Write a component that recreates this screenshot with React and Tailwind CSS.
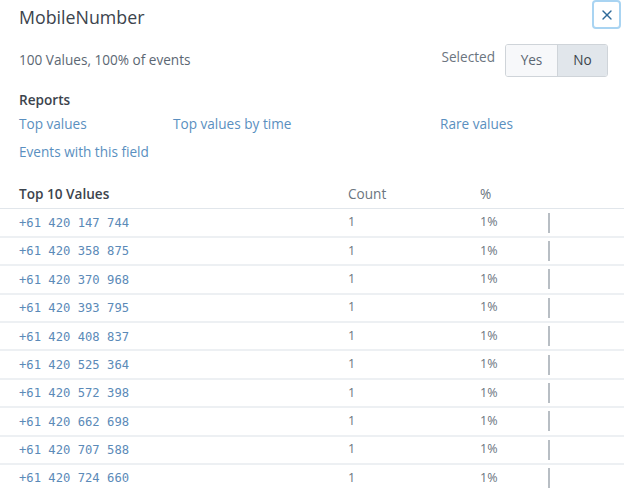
import { X } from 'lucide-react'

const ROWS = [
  '+61 420 147 744',
  '+61 420 358 875',
  '+61 420 370 968',
  '+61 420 393 795',
  '+61 420 408 837',
  '+61 420 525 364',
  '+61 420 572 398',
  '+61 420 662 698',
  '+61 420 707 588',
  '+61 420 724 660',
]

const sans = "font-['Open_Sans',sans-serif]"

export default function App() {
  return (
    <div className={`w-[624px] h-[488px] overflow-hidden bg-white relative ${sans}`}>
      {/* close */}
      <button className="absolute right-[3px] top-0 w-[29px] h-[29px] rounded-[4px] border-2 border-[#a9d4f2] flex items-center justify-center text-[#2f6a99]">
        <X size={16} strokeWidth={2} />
      </button>

      {/* header */}
      <div className="px-[19px] pt-[6px]">
        <h1 className="text-[17.8px] leading-[22px] text-[#3c444d] font-medium">MobileNumber</h1>
        <div className="flex items-center justify-between mt-[16px]">
          <p className="text-[13.6px] text-[#5c6773]">100 Values, 100% of events</p>
          <div className="flex items-center gap-[10px] mr-[-3px]">
            <span className="text-[13.6px] text-[#6b7580] mt-[-6px]">Selected</span>
            <div className="flex h-[33px] rounded-[3px] border border-[#cfd4d9] overflow-hidden text-[13.6px]">
              <span className="w-[52px] flex items-center justify-center bg-[#f7f8fa] text-[#5c6773] border-r border-[#cfd4d9]">Yes</span>
              <span className="w-[49px] flex items-center justify-center bg-[#e1e6eb] text-[#3c444d]">No</span>
            </div>
          </div>
        </div>

        {/* reports */}
        <p className="text-[13.6px] font-semibold text-[#3c444d] mt-[13px]">Reports</p>
        <div className="grid grid-cols-[154px_267px_1fr] text-[13.6px] text-[#5a8fc0] mt-[5px] leading-[18px]">
          <span>Top values</span>
          <span>Top values by time</span>
          <span>Rare values</span>
          <span className="mt-[10px]">Events with this field</span>
        </div>
      </div>

      {/* table */}
      <div className="mt-[19px]">
        <div className="grid grid-cols-[329px_132px_1fr] pl-[19px] h-[29px] items-center border-b border-[#e1e6eb] text-[13.6px]">
          <span className="font-semibold text-[#3c444d]">Top 10 Values</span>
          <span className="text-[#6b7580]">Count</span>
          <span className="text-[#6b7580]">%</span>
        </div>
        {ROWS.map(v => (
          <div
            key={v}
            className="grid grid-cols-[329px_132px_68px_1fr] pl-[19px] h-[28.4px] items-center border-b-2 border-[#edf0f3] text-[12.5px]"
          >
            <span className="font-['DejaVu_Sans_Mono',monospace] text-[#5b8ab8] text-[12.2px] pt-[1px]">{v}</span>
            <span className="text-[#6b7580]">1</span>
            <span className="text-[#6b7580]">1%</span>
            <span className="h-[20px] w-[2px] bg-[#b8bec4]" />
          </div>
        ))}
      </div>
    </div>
  )
}
